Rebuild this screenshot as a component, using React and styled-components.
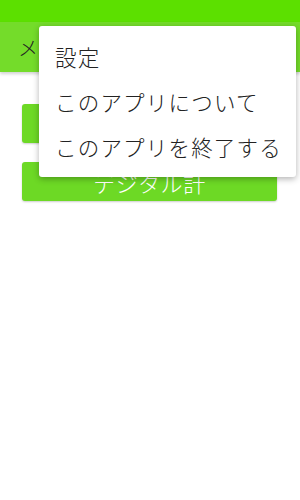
import React from "react";
import styled, { createGlobalStyle } from "styled-components";

const GlobalStyle = createGlobalStyle`
  html, body {
    margin: 0;
    padding: 0;
    background: #ffffff;
  }
  body {
    font-family: "Noto Sans CJK JP", "Noto Sans", Roboto, sans-serif;
  }
`;

const Screen = styled.div`
  position: relative;
  width: 300px;
  height: 500px;
  overflow: hidden;
  background: #ffffff;
`;

const StatusBar = styled.div`
  height: 22px;
  background: #5ce000;
`;

const Toolbar = styled.header`
  height: 50px;
  display: flex;
  align-items: center;
  padding-left: 18px;
  background: #74dc2a;
  box-shadow: 0 2px 3px rgba(0, 0, 0, 0.18);
`;

const Title = styled.h1`
  margin: 0;
  font-size: 20px;
  font-weight: 300;
  color: #222;
`;

const Content = styled.main`
  display: flex;
  flex-direction: column;
  gap: 19px;
  padding: 32px 23px 0 22px;
`;

const Button = styled.button`
  height: 39px;
  border: none;
  border-radius: 3px;
  background: #6dd925;
  color: #ffffff;
  font-family: inherit;
  font-size: 22px;
  font-weight: 300;
  letter-spacing: 0.6px;
  box-shadow: 0 1px 2px rgba(0, 0, 0, 0.2);
`;

const Menu = styled.ul`
  position: absolute;
  top: 26px;
  left: 39px;
  width: 257px;
  margin: 0;
  padding: 8px 0;
  list-style: none;
  background: #ffffff;
  border-radius: 3px;
  box-shadow: 0 2px 6px rgba(0, 0, 0, 0.3);
`;

const MenuItem = styled.li`
  height: 45px;
  display: flex;
  align-items: center;
  padding-left: 16px;
  font-size: 21.5px;
  font-weight: 300;
  letter-spacing: 1.2px;
  color: #222;
  white-space: nowrap;
`;

export default function App() {
  return (
    <>
      <GlobalStyle />
      <Screen>
        <StatusBar />
        <Toolbar>
          <Title>メニュー</Title>
        </Toolbar>
        <Content>
          <Button>アナログ計</Button>
          <Button>デジタル計</Button>
        </Content>
        <Menu>
          <MenuItem>設定</MenuItem>
          <MenuItem>このアプリについて</MenuItem>
          <MenuItem>このアプリを終了する</MenuItem>
        </Menu>
      </Screen>
    </>
  );
}
